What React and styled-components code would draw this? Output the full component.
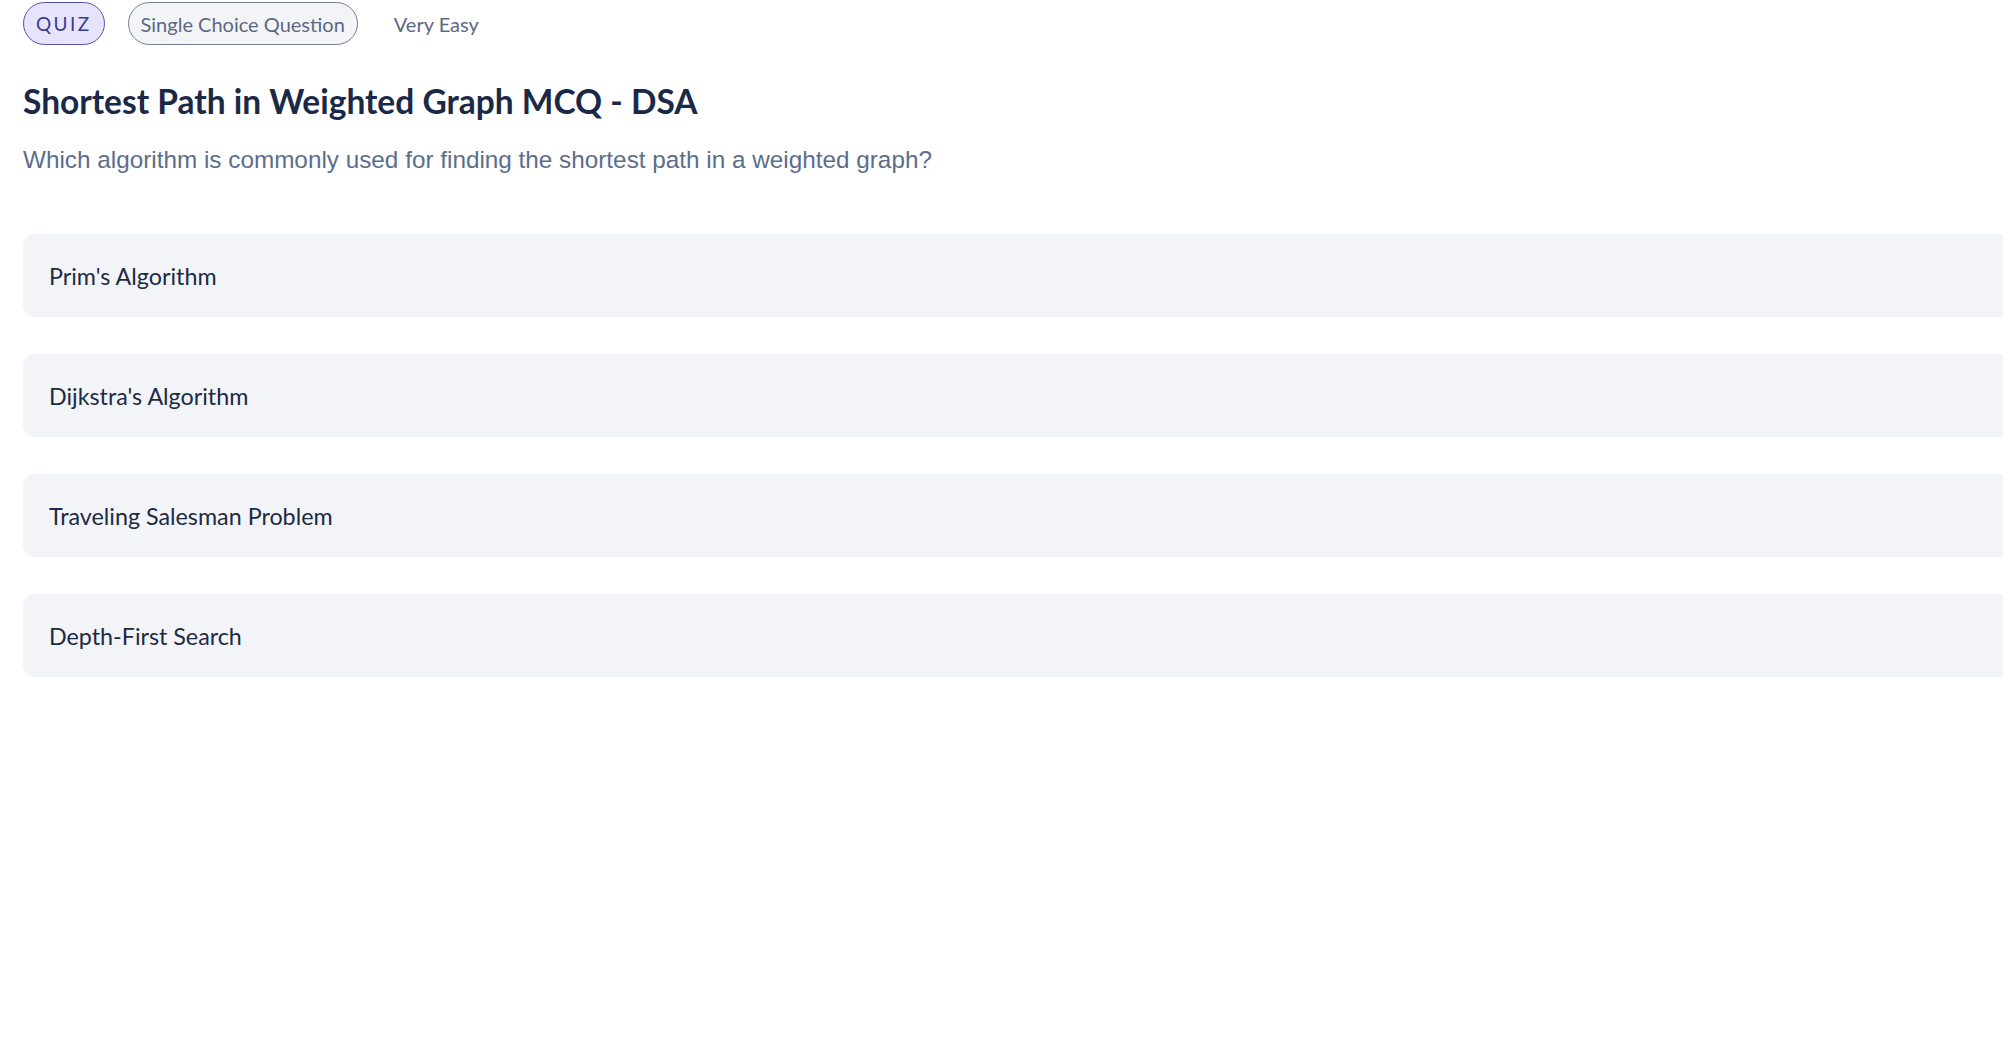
import styled, { createGlobalStyle } from "styled-components";

const GlobalStyle = createGlobalStyle`
  html, body {
    margin: 0;
    padding: 0;
    background: #ffffff;
    overflow: hidden;
  }
  * {
    box-sizing: border-box;
  }
`;

const Page = styled.div`
  padding: 2px 0 0 23px;
  font-family: Lato, "Noto Sans", sans-serif;
  color: #1b2a45;
`;

const MetaRow = styled.div`
  display: flex;
  align-items: center;
  gap: 23px;
  height: 43px;
`;

const Pill = styled.span`
  display: inline-flex;
  align-items: center;
  height: 43px;
  padding: 0 ${({ $pad }) => $pad}px;
  border-radius: 22px;
  font-size: ${({ $spaced }) => ($spaced ? "19px" : "20px")};
  letter-spacing: ${({ $spaced }) => ($spaced ? "2.4px" : "0")};
  color: ${({ $variant }) => ($variant === "quiz" ? "#3c3a8c" : "#5b6983")};
  background: ${({ $variant }) =>
    $variant === "quiz" ? "#e6e4fc" : $variant === "type" ? "#f3f4f8" : "transparent"};
  border: 1px solid
    ${({ $variant }) =>
      $variant === "quiz" ? "#5650b0" : $variant === "type" ? "#737d92" : "transparent"};
`;

const Title = styled.h1`
  margin: 34px 0 0;
  font-size: 33.5px;
  font-weight: 700;
  line-height: 44px;
  color: #1a2947;
`;

const Question = styled.p`
  margin: 22px 0 0;
  font-family: "Liberation Sans", Arial, sans-serif;
  font-size: 24.3px;
  line-height: 30px;
  color: #5b6e8c;
`;

const Options = styled.div`
  display: flex;
  flex-direction: column;
  gap: 37px;
  margin-top: 59px;
`;

const Option = styled.div`
  display: flex;
  align-items: center;
  height: 83px;
  padding-left: 26px;
  border-radius: 12px 0 0 12px;
  background: #f3f4f8;
  font-size: 23.3px;
  color: #1c2a44;
`;

const options = [
  "Prim's Algorithm",
  "Dijkstra's Algorithm",
  "Traveling Salesman Problem",
  "Depth-First Search",
];

export default function App() {
  return (
    <Page>
      <GlobalStyle />
      <MetaRow>
        <Pill $variant="quiz" $pad={12} $spaced>
          QUIZ
        </Pill>
        <Pill $variant="type" $pad={12}>
          Single Choice Question
        </Pill>
        <Pill $pad={12}>Very Easy</Pill>
      </MetaRow>
      <Title>Shortest Path in Weighted Graph MCQ - DSA</Title>
      <Question>
        Which algorithm is commonly used for finding the shortest path in a
        weighted graph?
      </Question>
      <Options>
        {options.map((label) => (
          <Option key={label}>{label}</Option>
        ))}
      </Options>
    </Page>
  );
}
